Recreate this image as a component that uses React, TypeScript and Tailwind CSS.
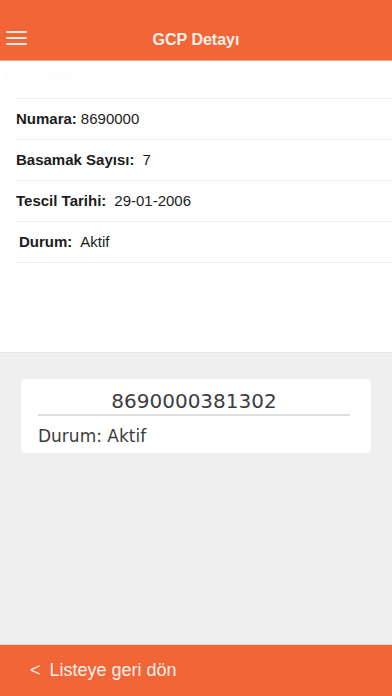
const rows = [
  { label: "Numara:", value: "8690000", pad: "pl-0", gap: "ml-1" },
  { label: "Basamak Sayısı:", value: "7", pad: "pl-0", gap: "ml-2" },
  { label: "Tescil Tarihi:", value: "29-01-2006", pad: "pl-0", gap: "ml-2" },
  { label: "Durum:", value: "Aktif", pad: "pl-[3px]", gap: "ml-2" },
]

export default function App() {
  return (
    <div className="flex h-[696px] w-[392px] flex-col overflow-hidden bg-[#efefef] font-['Liberation_Sans',Arial,sans-serif]">
      <header className="relative flex h-[61px] shrink-0 items-end justify-center border-b border-[#e9a48a] bg-[#f16536] pb-[10px]">
        <button type="button" className="absolute left-[6px] top-[31px] flex w-[21px] flex-col gap-[4px]" aria-label="Menu">
          <span className="h-[2px] w-full rounded bg-[#fde9df]" />
          <span className="h-[2px] w-full rounded bg-[#fde9df]" />
          <span className="h-[2px] w-full rounded bg-[#fde9df]" />
        </button>
        <h1 className="text-[16px] font-bold leading-[20px] text-[#fdf1ea]">GCP Detayı</h1>
      </header>

      <div className="flex h-[291px] shrink-0 flex-col bg-white">
        <div className="h-[37px] pl-1 pt-[4px] text-[15px] text-[#fcfdfd]">GCP Detay</div>
        <div className="ml-4 border-t border-[#ececec]">
          {rows.map((row) => (
            <div key={row.label} className={`flex h-[41px] items-center border-b border-[#ececec] text-[15px] text-[#1c1c1c] ${row.pad}`}>
              <span className="font-bold">{row.label}</span>
              <span className={row.gap}>{row.value}</span>
            </div>
          ))}
        </div>
      </div>

      <main className="flex-1 border-t border-[#e6e6e6] pt-[26px]">
        <div className="mx-[21px] flex h-[74px] flex-col rounded-[3px] bg-white pl-[17px] pr-[21px] font-['DejaVu_Sans',Verdana,sans-serif] text-[#3d3d3d]">
          <div className="border-b-2 border-[#dedede] pt-[10px] pb-[1px] text-center text-[20px] leading-[24px]">8690000381302</div>
          <div className="pt-[10px] text-[17px] leading-[20px]">Durum: Aktif</div>
        </div>
      </main>

      <footer className="flex h-[52px] shrink-0 items-center border-t border-[#e2d5cf] bg-[#f16536] pl-[30px] text-[18px] text-[#fdf1ea]">
        <span className="mr-[9px]">&lt;</span>
        <span>Listeye geri dön</span>
      </footer>
    </div>
  )
}
